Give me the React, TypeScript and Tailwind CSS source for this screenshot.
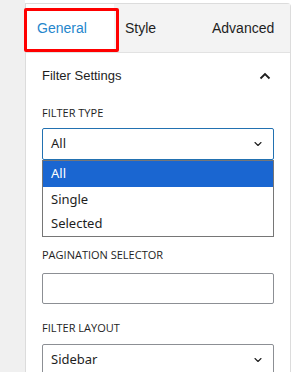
import { ChevronDown } from 'lucide-react'

const labelCls = "block text-[11px] leading-4 font-medium uppercase text-[#1e1e1e] font-['Open_Sans',sans-serif]"

function ChevronUp() {
  return (
    <svg width="12" height="8" viewBox="0 0 12 8" fill="none">
      <path d="M1.5 6.5 L6 2 L10.5 6.5" stroke="#1e1e1e" strokeWidth="1.8" />
    </svg>
  )
}

export default function App() {
  const options = ['All', 'Single', 'Selected']

  return (
    <div className="w-[293px] h-[372px] flex overflow-hidden bg-white font-['Liberation_Sans',Arial,sans-serif]">
      <div className="w-[25px] shrink-0 bg-[#f0f0f0]" />

      <div className="relative w-[266px] mt-[3px] border-l border-t border-r border-[#dcdcdc] rounded-tr-[4px] bg-white">
        {/* tabs */}
        <div className="grid grid-cols-3 h-[49px] bg-[#f3f3f3] border-b border-[#e2e2e2] text-[14px] text-[#1e1e1e]">
          <div className="flex items-center pl-[11px] bg-white text-[#2586cc]">General</div>
          <div className="flex items-center pl-[11px]">Style</div>
          <div className="flex items-center pl-[10px]">Advanced</div>
        </div>
        <div className="absolute left-[-2px] top-[4px] w-[95px] h-[44px] border-[3px] border-[#ff0000] rounded-[2px]" />

        <div className="px-4">
          <div className="h-[46px] flex items-center justify-between text-[13px] text-[#1e1e1e]">
            <span>Filter Settings</span>
            <span className="mr-[3px]"><ChevronUp /></span>
          </div>

          <label className={labelCls + ' mt-[6px] mb-[7px]'}>Filter Type</label>
          <div className="h-[32px] flex items-center justify-between px-2 border border-[#2271b1] rounded-[2px] text-[13px] text-[#1e1e1e] font-['Noto_Sans',sans-serif]">
            <span>All</span>
            <ChevronDown size={12} strokeWidth={2.2} className="text-[#1e1e1e] mr-[1px]" />
          </div>
          <div className="border border-[#767676] text-[13px] text-[#1e1e1e] font-['Noto_Sans',sans-serif]">
            {options.map((o, i) => (
              <div
                key={o}
                className={
                  i === 0
                    ? 'h-[26px] flex items-center px-2 bg-[#1a66d1] text-white'
                    : 'h-[24.5px] flex items-center px-2'
                }
              >
                {o}
              </div>
            ))}
          </div>

          <label className={labelCls + ' mt-[10px] mb-[10px]'}>Pagination Selector</label>
          <div className="h-[31px] border border-[#8c8f94] rounded-[2px]" />

          <label className={labelCls + ' mt-[16px] mb-[8px]'}>Filter Layout</label>
          <div className="h-[32px] flex items-center justify-between px-2 border border-[#8c8f94] rounded-[2px] text-[13px] text-[#1e1e1e] font-['Noto_Sans',sans-serif]">
            <span>Sidebar</span>
            <ChevronDown size={12} strokeWidth={2.2} className="text-[#1e1e1e] mr-[1px]" />
          </div>
        </div>
      </div>
    </div>
  )
}
